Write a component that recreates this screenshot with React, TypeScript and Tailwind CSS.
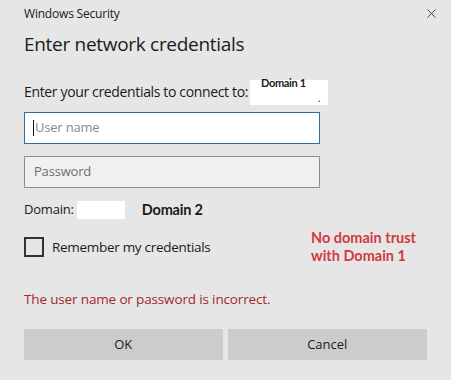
import { X } from "lucide-react"

const ui = { fontFamily: '"Open Sans", "Noto Sans", sans-serif' }
const note = { fontFamily: '"Lato", "Open Sans", sans-serif' }

const App = () => {
    return (
        <div className="relative w-[451px] h-[380px] bg-[#e6e6e6] text-[#1a1a1a] overflow-hidden" style={ui}>
            {/* title bar */}
            <div className="flex items-center justify-between pl-6 pr-[12px] pt-[5px] h-[22px]">
                <div className="text-[12px] leading-[16px] tracking-[-0.2px]">Windows Security</div>
                <X className="w-[15px] h-[15px] text-[#333]" strokeWidth={1.4} />
            </div>

            <div className="px-6">
                <div className="mt-[9px] text-[19px] leading-[26px] tracking-[-0.3px]">Enter network credentials</div>

                <div className="mt-[20px] flex items-end text-[14px] leading-[20px] tracking-[-0.35px]">
                    <span>Enter your credentials to connect to:</span>
                    <span className="relative ml-[2px] inline-block w-[78px] h-[25px] bg-white translate-y-[3px]">
                        <span className="absolute left-[11px] top-[-4px] text-[11px] font-bold leading-[14px]" style={note}>Domain 1</span>
                        <span className="absolute left-[68px] top-[8px] text-[10px]">.</span>
                    </span>
                </div>

                <div className="mt-[10px] w-[296px] h-[32px] bg-white border-[1.5px] border-[#2c6e9c] flex items-center pl-[8px]">
                    <span className="w-px h-[16px] bg-[#111] mr-px" />
                    <span className="text-[13px] text-[#8a8a8a] tracking-[-0.2px]">User name</span>
                </div>

                <div className="mt-[12px] w-[296px] h-[32px] bg-[#f0f0f0] border border-[#8c8c8c] flex items-center pl-[9px]">
                    <span className="text-[13px] text-[#6e6e6e] tracking-[-0.2px]">Password</span>
                </div>

                <div className="mt-[12px] flex items-center h-[20px] text-[13px] tracking-[-0.2px]">
                    <span>Domain:</span>
                    <span className="ml-[3px] inline-block w-[48px] h-[18px] bg-white" />
                    <span className="ml-[17px] font-bold text-[14.5px]" style={note}>Domain 2</span>
                </div>

                <div className="mt-[17px] flex items-center h-[20px]">
                    <span className="w-[20px] h-[20px] border-2 border-[#333] bg-[#e6e6e6]" />
                    <span className="ml-[8px] text-[13.5px] tracking-[-0.3px]">Remember my credentials</span>
                </div>

                <div className="mt-[33px] text-[13.5px] leading-[18px] text-[#a4262c] tracking-[-0.15px]">
                    The user name or password is incorrect.
                </div>

                <div className="mt-[21px] flex gap-[5px]">
                    <button className="w-[200px] h-[31px] bg-[#cccccc] text-[13px] text-[#1a1a1a]">OK</button>
                    <button className="w-[201px] h-[31px] bg-[#cccccc] text-[13px] text-[#1a1a1a]">Cancel</button>
                </div>
            </div>

            {/* annotation */}
            <div className="absolute left-[311px] top-[229px] text-[14.5px] leading-[18px] font-bold text-[#d2393f]" style={note}>
                <div>No domain trust</div>
                <div>with Domain 1</div>
            </div>
        </div>
    )
}

export default App
